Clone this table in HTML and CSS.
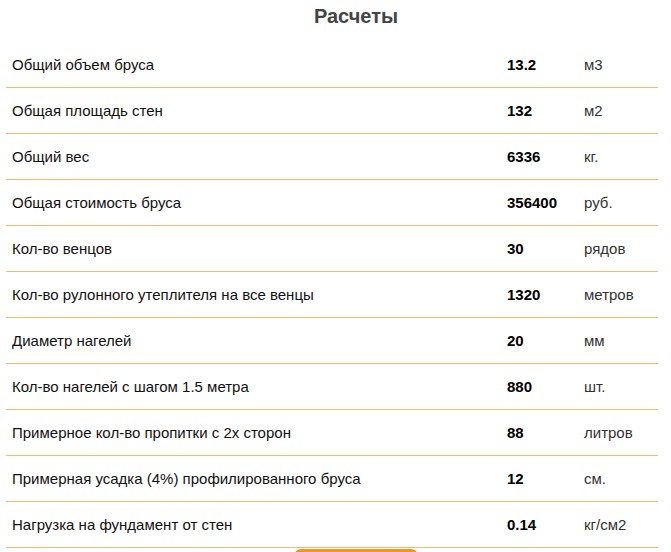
FILE: index.html
```html
<!DOCTYPE html>
<html lang="ru">
<head>
<meta charset="utf-8">
<title>Расчеты</title>
<link rel="stylesheet" href="styles.css">
</head>
<body>
<div class="calc">
  <h2 class="calc-title">Расчеты</h2>
  <div class="calc-table">
    <div class="row"><span class="label">Общий объем бруса</span><span class="value">13.2</span><span class="unit">м3</span></div>
    <div class="row"><span class="label">Общая площадь стен</span><span class="value">132</span><span class="unit">м2</span></div>
    <div class="row"><span class="label">Общий вес</span><span class="value">6336</span><span class="unit">кг.</span></div>
    <div class="row"><span class="label">Общая стоимость бруса</span><span class="value">356400</span><span class="unit">руб.</span></div>
    <div class="row"><span class="label">Кол-во венцов</span><span class="value">30</span><span class="unit">рядов</span></div>
    <div class="row"><span class="label">Кол-во рулонного утеплителя на все венцы</span><span class="value">1320</span><span class="unit">метров</span></div>
    <div class="row"><span class="label">Диаметр нагелей</span><span class="value">20</span><span class="unit">мм</span></div>
    <div class="row"><span class="label">Кол-во нагелей с шагом 1.5 метра</span><span class="value">880</span><span class="unit">шт.</span></div>
    <div class="row"><span class="label">Примерное кол-во пропитки с 2х сторон</span><span class="value">88</span><span class="unit">литров</span></div>
    <div class="row"><span class="label">Примерная усадка (4%) профилированного бруса</span><span class="value">12</span><span class="unit">см.</span></div>
    <div class="row"><span class="label">Нагрузка на фундамент от стен</span><span class="value">0.14</span><span class="unit">кг/см2</span></div>
  </div>
  <div class="actions"><button class="btn" type="button" aria-label="Рассчитать"></button></div>
</div>
</body>
</html>
```
FILE: styles.css
```css
html, body {
  margin: 0;
  padding: 0;
  background: #fff;
  overflow: hidden;
}
body {
  font-family: "Liberation Sans", Arial, sans-serif;
  color: #111;
}
.calc {
  padding: 0 13px 0 6px;
}
.calc-title {
  margin: 0 0 10px 0;
  padding-left: 48px;
  line-height: 32px;
  font-size: 20px;
  font-weight: bold;
  color: #444;
  text-align: center;
}
.calc-table {
  width: 652px;
}
.row {
  display: grid;
  grid-template-columns: 495px 77px 80px;
  align-items: center;
  height: 45px;
  border-bottom: 1px solid #f0bb70;
  font-size: 15px;
}
.label, .value, .unit {
  padding-left: 6px;
}
.label { color: #111; }
.value { font-weight: bold; color: #000; }
.unit { color: #333; }
.actions {
  display: flex;
  justify-content: center;
  padding-left: 47px;
  padding-top: 1px;
}
.btn {
  width: 124px;
  height: 44px;
  padding: 0;
  border: none;
  border-radius: 7px;
  background: #f7931e;
}
```
